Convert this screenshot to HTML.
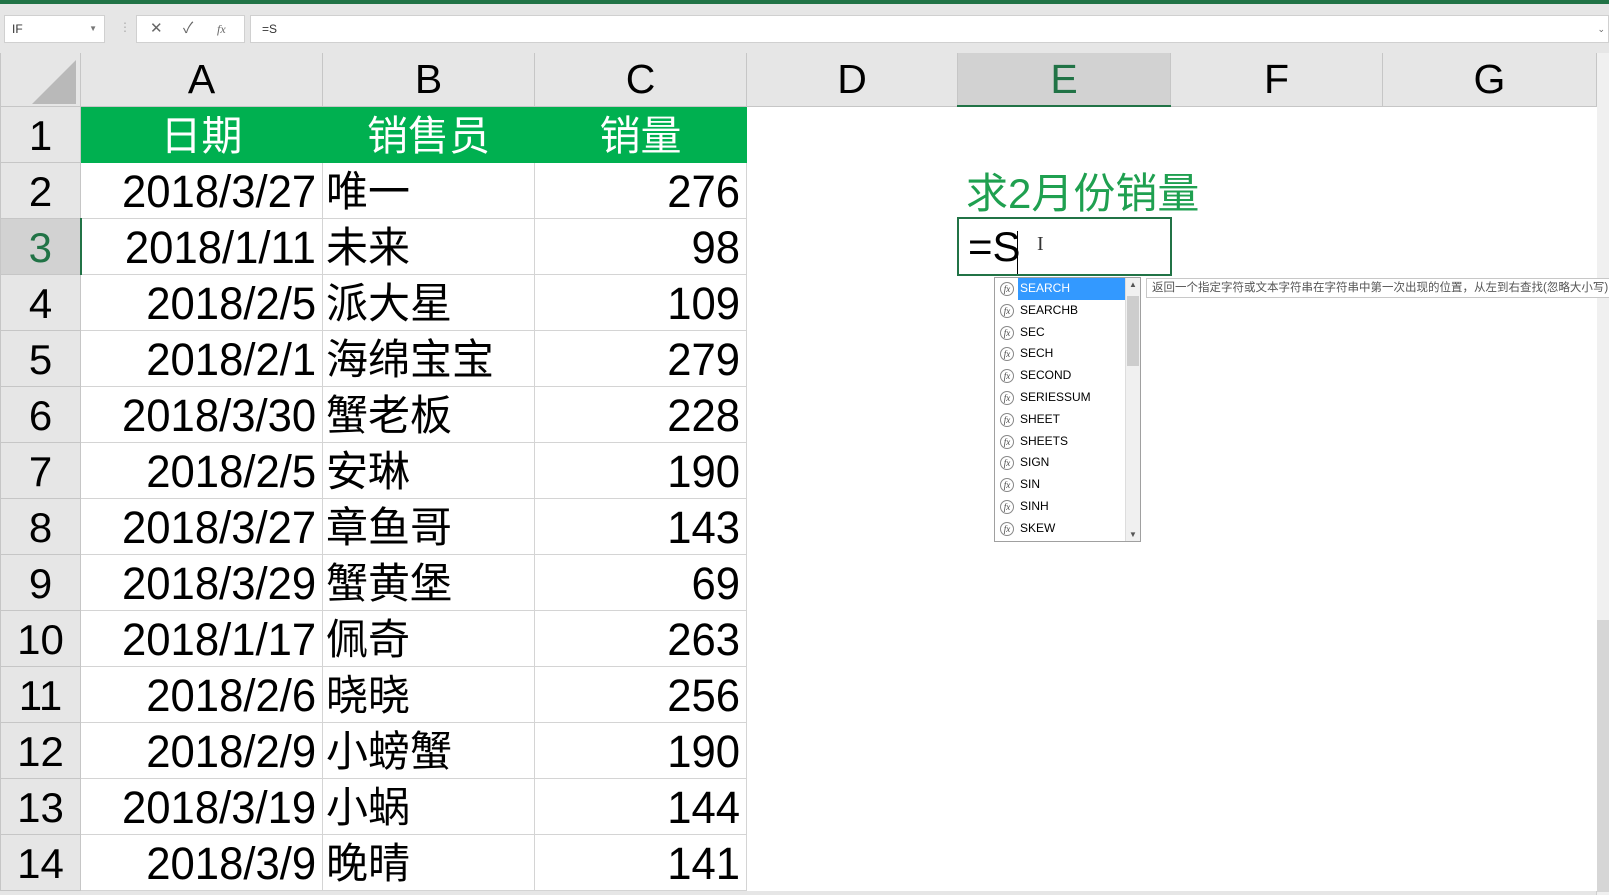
<!DOCTYPE html>
<html><head><meta charset="utf-8"><style>
*{margin:0;padding:0;box-sizing:border-box}
body{width:1609px;height:895px;overflow:hidden;background:#e6e6e6;position:relative;font-family:"Liberation Sans","Noto Sans CJK SC",sans-serif}
.top{position:absolute;left:0;top:0;width:1609px;height:4px;background:#217346}
.fb{position:absolute;top:15px;height:28px;background:#fff;border:1px solid #d0d0d0;font-size:12px;color:#333;line-height:26px}
table{position:absolute;left:0;top:53px;border-collapse:collapse;table-layout:fixed;background:#fff}
tr{height:56px}
td{border:1px solid #d4d4d4;height:56px;padding:3px 0 0 0;overflow:hidden;white-space:nowrap;font-size:45px;color:#000;line-height:50px}
td.e{border:none}
tr.h{height:53px}
tr.h td{height:53px;padding:0;background:#e6e6e6;text-align:center;font-size:41px;border:1px solid #c6c6c6;border-top:none;line-height:52px}
td.rh{background:#e6e6e6;text-align:center;border-color:#c6c6c6;font-size:42px}
td.n{text-align:right;padding-right:6px}
td.n span{display:inline-block;transform:scaleX(.97);transform-origin:right}
td.c{font-size:42px;padding-left:3px}
tr.g td.d{background:#00b050;color:#fff;font-size:41px;text-align:center;border-color:#00b050}
.dd{position:absolute;left:994px;top:277px;width:147px;height:265px;background:#fff;border:1px solid #a0a0a0}
.it{height:21.8px;font-size:12px;line-height:21.8px;padding-left:25px;position:relative;color:#000}
.it i{position:absolute;left:5px;top:4px;width:14px;height:14px;border:1px solid #888;border-radius:50%;font-size:9px;line-height:12px;text-align:center;font-style:italic;font-family:"Liberation Serif",serif;color:#444}
.sel{background:#3399ff;color:#fff;width:108px;display:inline-block;padding-left:2px;margin-left:-2px}
</style></head><body>
<div class="top"></div>
<div class="fb" style="left:4px;width:101px;padding-left:7px">IF<span style="position:absolute;right:7px;top:0;color:#777;font-size:8px">▼</span></div>
<div style="position:absolute;left:119px;top:20px;color:#aaa;font-size:12px">⋮</div>
<div class="fb" style="left:136px;width:109px;color:#666"><span style="position:absolute;left:13px;font-size:15px">✕</span><span style="position:absolute;left:46px;font-size:15px">✓</span><span style="position:absolute;left:80px;font-family:'Liberation Serif',serif;font-style:italic">fx</span></div>
<div class="fb" style="left:250px;width:1359px;padding-left:11px">=S<span style="position:absolute;right:3px;color:#666;font-size:9px">⌄</span></div>
<div style="position:absolute;left:1596px;top:53px;width:13px;height:842px;background:#f0f0f0;border-left:1px solid #cfcfcf"></div>
<div style="position:absolute;left:1597px;top:620px;width:12px;height:272px;background:#d6d6d6"></div>
<table>
<colgroup><col style="width:80px"><col style="width:242px"><col style="width:212px"><col style="width:212px"><col style="width:211px"><col style="width:213px"><col style="width:212px"><col style="width:214px"></colgroup>
<tr class="h"><td style="background:#e6e6e6;position:relative"><div style="position:absolute;right:4px;bottom:2px;width:0;height:0;border-left:44px solid transparent;border-bottom:44px solid #b9b9b9"></div></td><td>A</td><td>B</td><td>C</td><td>D</td><td style="background:#d2d2d2;color:#217346;border-bottom:2px solid #217346">E</td><td>F</td><td>G</td></tr>
<tr class="g"><td class="rh">1</td><td class="d">日期</td><td class="d">销售员</td><td class="d">销量</td><td class="e"></td><td class="e"></td><td class="e"></td><td class="e"></td></tr>
<tr><td class="rh">2</td><td class="n"><span>2018/3/27</span></td><td class="c">唯一</td><td class="n"><span>276</span></td><td class="e"></td><td class="e"></td><td class="e"></td><td class="e"></td></tr>
<tr><td class="rh" style="background:#d2d2d2;color:#217346;border-right:2px solid #217346">3</td><td class="n"><span>2018/1/11</span></td><td class="c">未来</td><td class="n"><span>98</span></td><td class="e"></td><td class="e"></td><td class="e"></td><td class="e"></td></tr>
<tr><td class="rh">4</td><td class="n"><span>2018/2/5</span></td><td class="c">派大星</td><td class="n"><span>109</span></td><td class="e"></td><td class="e"></td><td class="e"></td><td class="e"></td></tr>
<tr><td class="rh">5</td><td class="n"><span>2018/2/1</span></td><td class="c">海绵宝宝</td><td class="n"><span>279</span></td><td class="e"></td><td class="e"></td><td class="e"></td><td class="e"></td></tr>
<tr><td class="rh">6</td><td class="n"><span>2018/3/30</span></td><td class="c">蟹老板</td><td class="n"><span>228</span></td><td class="e"></td><td class="e"></td><td class="e"></td><td class="e"></td></tr>
<tr><td class="rh">7</td><td class="n"><span>2018/2/5</span></td><td class="c">安琳</td><td class="n"><span>190</span></td><td class="e"></td><td class="e"></td><td class="e"></td><td class="e"></td></tr>
<tr><td class="rh">8</td><td class="n"><span>2018/3/27</span></td><td class="c">章鱼哥</td><td class="n"><span>143</span></td><td class="e"></td><td class="e"></td><td class="e"></td><td class="e"></td></tr>
<tr><td class="rh">9</td><td class="n"><span>2018/3/29</span></td><td class="c">蟹黄堡</td><td class="n"><span>69</span></td><td class="e"></td><td class="e"></td><td class="e"></td><td class="e"></td></tr>
<tr><td class="rh">10</td><td class="n"><span>2018/1/17</span></td><td class="c">佩奇</td><td class="n"><span>263</span></td><td class="e"></td><td class="e"></td><td class="e"></td><td class="e"></td></tr>
<tr><td class="rh">11</td><td class="n"><span>2018/2/6</span></td><td class="c">晓晓</td><td class="n"><span>256</span></td><td class="e"></td><td class="e"></td><td class="e"></td><td class="e"></td></tr>
<tr><td class="rh">12</td><td class="n"><span>2018/2/9</span></td><td class="c">小螃蟹</td><td class="n"><span>190</span></td><td class="e"></td><td class="e"></td><td class="e"></td><td class="e"></td></tr>
<tr><td class="rh">13</td><td class="n"><span>2018/3/19</span></td><td class="c">小蜗</td><td class="n"><span>144</span></td><td class="e"></td><td class="e"></td><td class="e"></td><td class="e"></td></tr>
<tr><td class="rh">14</td><td class="n"><span>2018/3/9</span></td><td class="c">晚晴</td><td class="n"><span>141</span></td><td class="e"></td><td class="e"></td><td class="e"></td><td class="e"></td></tr>
</table>
<div style="position:absolute;left:966px;top:168px;font-size:42px;color:#1fa050;line-height:52px">求2月份销量</div>
<div style="position:absolute;left:957px;top:217px;width:215px;height:59px;border:2px solid #217346;background:#fff;font-size:42px;line-height:55px;padding-left:9px">=S<span style="position:absolute;left:58px;top:12px;width:1px;height:43px;background:#000"></span><span style="position:absolute;left:78px;top:-2px;font-size:20px;color:#333;font-family:'Liberation Serif',serif">I</span></div>
<div class="dd">
<div class="it"><i>fx</i><span class="sel">SEARCH</span></div>
<div class="it"><i>fx</i>SEARCHB</div>
<div class="it"><i>fx</i>SEC</div>
<div class="it"><i>fx</i>SECH</div>
<div class="it"><i>fx</i>SECOND</div>
<div class="it"><i>fx</i>SERIESSUM</div>
<div class="it"><i>fx</i>SHEET</div>
<div class="it"><i>fx</i>SHEETS</div>
<div class="it"><i>fx</i>SIGN</div>
<div class="it"><i>fx</i>SIN</div>
<div class="it"><i>fx</i>SINH</div>
<div class="it"><i>fx</i>SKEW</div>
<div style="position:absolute;right:0;top:0;width:15px;height:263px;background:#f0f0f0;border-left:1px solid #ddd"><div style="position:absolute;top:2px;left:3px;font-size:8px;color:#555">▲</div><div style="position:absolute;top:18px;left:1px;width:12px;height:70px;background:#cdcdcd"></div><div style="position:absolute;bottom:2px;left:3px;font-size:8px;color:#555">▼</div></div>
</div>
<div style="position:absolute;left:1146px;top:278px;width:470px;height:20px;background:#fff;border:1px solid #c8c8c8;font-size:11.5px;color:#555;line-height:18px;padding-left:5px;white-space:nowrap;overflow:hidden">返回一个指定字符或文本字符串在字符串中第一次出现的位置，从左到右查找(忽略大小写)</div>
</body></html>
